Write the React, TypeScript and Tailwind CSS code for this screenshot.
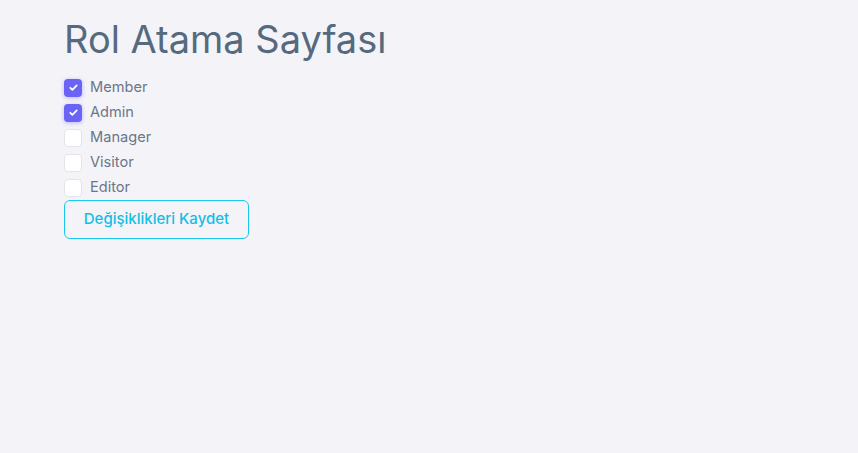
import React, { useState } from 'react';

const ROLES = ['Member', 'Admin', 'Manager', 'Visitor', 'Editor'];

const Check: React.FC<{ checked: boolean; onToggle: () => void; label: string }> = ({ checked, onToggle, label }) => (
  <label className="flex items-center h-[25px] cursor-pointer" onClick={onToggle}>
    <span
      className={`w-[18px] h-[18px] rounded-[4px] flex items-center justify-center ${
        checked ? 'bg-[#6a63f6] shadow-[0_1px_4px_rgba(106,99,246,0.45)]' : 'bg-white border border-[#e3e3ea]'
      }`}
    >
      {checked && (
        <svg width="11" height="11" viewBox="0 0 12 12" fill="none">
          <path d="M2.5 6.3l2.3 2.3 4.7-4.9" stroke="white" strokeWidth="1.9" strokeLinecap="round" strokeLinejoin="round" />
        </svg>
      )}
    </span>
    <span className="ml-2 text-[14.6px] text-[#6b7689]">{label}</span>
  </label>
);

export default function App() {
  const [selected, setSelected] = useState<string[]>(['Member', 'Admin']);

  const toggle = (r: string) =>
    setSelected(s => (s.includes(r) ? s.filter(x => x !== r) : [...s, r]));

  return (
    <div className="min-h-[453px] bg-[#f4f4f8] px-16 pt-[14px]" style={{ fontFamily: 'Inter, "Noto Sans", sans-serif' }}>
      <h1 className="text-[38px] leading-[50px] text-[#566a7f] font-normal mb-[11px]">Rol Atama Sayfası</h1>
      <div className="flex flex-col">
        {ROLES.map(r => (
          <Check key={r} label={r} checked={selected.includes(r)} onToggle={() => toggle(r)} />
        ))}
      </div>
      <button className="w-[185px] h-[39px] rounded-[6px] border border-[#1cc7ee] text-[#14bde6] text-[15px] font-medium bg-transparent">
        Değişiklikleri Kaydet
      </button>
    </div>
  );
}
